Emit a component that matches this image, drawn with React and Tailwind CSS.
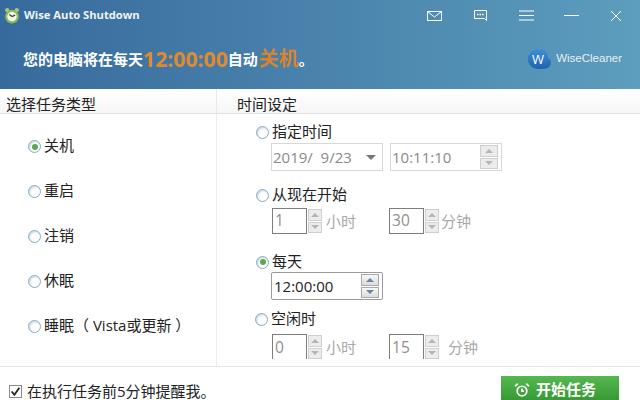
import React from 'react';

const cjk = "font-['Open_Sans','Noto_Sans_CJK_SC',sans-serif]";

function Radio({ checked }) {
  return (
    <span className="flex h-[13px] w-[13px] shrink-0 items-center justify-center rounded-full border border-[#85adc4] bg-white shadow-[inset_1px_1px_2px_#c3d2db]">
      {checked && <span className="h-[6px] w-[6px] rounded-full bg-[#5fa84f]" />}
    </span>
  );
}

function TaskOption({ label, checked }) {
  return (
    <div className="flex h-[45px] items-center gap-[3px] pl-[28px] text-[15px] leading-none text-[#222]">
      <Radio checked={checked} />
      <span className="pb-[2px]">{label}</span>
    </div>
  );
}

function TimeOption({ label, checked, className = '' }) {
  return (
    <div className={`flex h-[18px] items-center gap-[3px] pl-[20px] text-[15px] leading-none text-[#222] ${className}`}>
      <Radio checked={checked} />
      <span className="pb-[1px]">{label}</span>
    </div>
  );
}

function Spin({ w, h, active }) {
  const arrow = active ? 'border-[#6f7fa8]' : 'border-[#b5b5b5]';
  const btn = active
    ? 'border-[#a9a9a9] bg-gradient-to-b from-[#f7f7f7] to-[#dcdcdc]'
    : 'border-[#cfcfcf] bg-[#ececec]';
  return (
    <div className={`flex shrink-0 flex-col gap-px ${w} ${h}`}>
      <div className={`flex flex-1 items-center justify-center border ${btn}`}>
        <span className={`h-0 w-0 border-x-[4px] border-b-[4px] border-x-transparent ${arrow}`} />
      </div>
      <div className={`flex flex-1 items-center justify-center border ${btn}`}>
        <span className={`h-0 w-0 border-x-[4px] border-t-[4px] border-x-transparent ${arrow}`} />
      </div>
    </div>
  );
}

function NumberField({ value, unit, unitGap = 'ml-[4px]', clipped }) {
  return (
    <div className="flex items-center">
      <div className={`flex h-[26px] w-[35px] items-center border border-[#7d7d7d] pl-[2px] text-[15.5px] text-[#8f8f8f] ${clipped ? 'border-b-0' : ''}`}>
        {value}
      </div>
      <div className="ml-[1px]">
        <Spin w="w-[14px]" h="h-[24px]" />
      </div>
      <span className={`${unitGap} text-[15px] leading-none text-[#a9a9a9]`}>{unit}</span>
    </div>
  );
}

export default function App() {
  return (
    <div className={`flex h-[400px] w-[640px] flex-col overflow-hidden bg-white ${cjk}`}>
      <div className="flex h-[89px] shrink-0 flex-col bg-gradient-to-r from-[#376a9c] to-[#5d9dbd] text-white">
        <div className="flex h-[31px] items-center pl-[4px]">
          <svg width="16" height="17" viewBox="0 0 15 16" className="mr-[4px]">
            <circle cx="3" cy="3" r="2" fill="#a9c77c" />
            <circle cx="12" cy="3" r="2" fill="#a9c77c" />
            <circle cx="7.5" cy="9" r="6.5" fill="#8fb35f" />
            <circle cx="7.5" cy="9" r="4.5" fill="#f1f5e6" />
            <path d="M7.5 9 L5 7 M7.5 9 L10.5 7.5" stroke="#39451f" strokeWidth="1.2" />
          </svg>
          <span className="font-['Open_Sans',sans-serif] text-[11.2px] font-bold text-[#eef4f8]">Wise Auto Shutdown</span>
          <div className="ml-auto flex items-center">
            <svg width="15" height="12" viewBox="0 0 15 12" fill="none" stroke="white" className="mr-[32px]">
              <rect x="0.5" y="1.5" width="14" height="9" />
              <path d="M0.5 1.5 L7.5 7 L14.5 1.5" />
            </svg>
            <svg width="13" height="13" viewBox="0 0 13 13" fill="none" stroke="white" className="mr-[32px]">
              <path d="M0.5 1.5 H12.5 V11.5 L10.5 9.5 H0.5 Z" />
              <path d="M3 5.5 H4.5 M5.5 5.5 H7 M8 5.5 H9.5" strokeWidth="1.6" />
            </svg>
            <svg width="15" height="11" viewBox="0 0 15 11" stroke="white" className="mr-[30px]">
              <path d="M0 1 H15 M0 5.5 H15 M0 10 H15" />
            </svg>
            <svg width="15" height="3" viewBox="0 0 15 3" stroke="white" className="mr-[31px]">
              <path d="M0 1.5 H15" />
            </svg>
            <svg width="12" height="12" viewBox="0 0 12 12" stroke="white" className="mr-[18px]">
              <path d="M1 1 L11 11 M11 1 L1 11" />
            </svg>
          </div>
        </div>
        <div className="flex flex-1 items-center pb-[2px] pl-[23px]">
          <span className="text-[15px] font-bold leading-none">您的电脑将在每天</span>
          <span className="text-[21.2px] font-bold leading-none text-[#e08a2e]">12:00:00</span>
          <span className="text-[15px] font-bold leading-none">自动</span>
          <span className="ml-[1px] text-[20px] font-bold leading-none text-[#d9832c]">关机</span>
          <span className="text-[15px] font-bold leading-none">。</span>
          <div className="ml-auto mr-[18px] flex items-center">
            <svg width="24" height="22" viewBox="0 0 24 22" className="mr-[4px]">
              <defs>
                <linearGradient id="wc" x1="0" y1="0" x2="0" y2="1">
                  <stop offset="0" stopColor="#3f8fd8" />
                  <stop offset="1" stopColor="#1f62ad" />
                </linearGradient>
              </defs>
              <path d="M11 1 C17 1 20 5 20 10 C23 11 24 15 22 18 C20 21 15 21 11 21 C5 21 0 17 0 11 C0 5 5 1 11 1 Z" fill="url(#wc)" />
              <text x="10" y="15.5" textAnchor="middle" fontSize="13" fontWeight="400" fill="white">W</text>
            </svg>
            <span className="font-['Liberation_Sans',sans-serif] text-[11.5px] leading-none text-[#e6f0f5]">WiseCleaner</span>
          </div>
        </div>
      </div>

      <div className="flex h-[25px] shrink-0 border-b border-[#e2e2e2] bg-gradient-to-b from-white to-[#f6f6f6] text-[15px] leading-none text-[#222]">
        <div className="flex w-[217px] items-end border-r border-[#e8e8e8] pb-[1px] pl-[6px]">选择任务类型</div>
        <div className="flex flex-1 items-end pb-[1px] pl-[20px]">时间设定</div>
      </div>

      <div className="flex h-[253px] shrink-0 border-b border-[#e6e6e6]">
        <div className="w-[217px] shrink-0 border-r border-[#ececec] pt-[10px]">
          <TaskOption label="关机" checked />
          <TaskOption label="重启" />
          <TaskOption label="注销" />
          <TaskOption label="休眠" />
          <TaskOption label="睡眠（ Vista或更新 ）" />
        </div>
        <div className="h-[245px] flex-1 overflow-hidden pl-[19px] pt-[9px]">
          <TimeOption label="指定时间" />
          <div className="mt-[2px] ml-[35px] flex gap-[7px]">
            <div className="flex h-[28px] w-[112px] items-center justify-between border border-[#d8d8d8] pl-[1px] pr-[6px] text-[15px] text-[#8a8a8a]">
              <span>2019/&nbsp; 9/23</span>
              <span className="h-0 w-0 border-x-[5px] border-t-[5px] border-x-transparent border-t-[#777]" />
            </div>
            <div className="flex h-[28px] w-[112px] items-center justify-between border border-[#d8d8d8] pl-[1px] pr-[3px] text-[15px] text-[#8a8a8a]">
              <span>10:11:10</span>
              <Spin w="w-[18px]" h="h-[24px]" />
            </div>
          </div>
          <TimeOption label="从现在开始" className="mt-[15px]" />
          <div className="ml-[36px] mt-[4px] flex gap-[33px]">
            <NumberField value="1" unit="小时" />
            <NumberField value="30" unit="分钟" unitGap="ml-[2px]" />
          </div>
          <TimeOption label="每天" checked className="mt-[19px]" />
          <div className="ml-[35px] mt-[1px] flex h-[28px] w-[112px] items-center justify-between rounded-[2px] border border-[#9a9a9a] pl-[2px] pr-[3px] text-[15px] text-[#222]">
            <span>12:00:00</span>
            <Spin w="w-[18px]" h="h-[24px]" active />
          </div>
          <TimeOption label="空闲时" className="-ml-px mt-[10px]" />
          <div className="ml-[36px] mt-[6px] flex gap-[33px]">
            <NumberField value="0" unit="小时" clipped />
            <NumberField value="15" unit="分钟" unitGap="ml-[9px]" clipped />
          </div>
        </div>
      </div>

      <div className="flex flex-1 items-start">
        <div className="mt-[17px] flex items-center pl-[9px] text-[15px] leading-none text-[#222]">
          <span className="mr-[5px] flex h-[13px] w-[13px] items-center justify-center border border-[#8a8a8a]">
            <svg width="11" height="11" viewBox="0 0 10 10" fill="none" stroke="#222" strokeWidth="1.6">
              <path d="M1.5 5 L4 8 L8.5 1.5" />
            </svg>
          </span>
          <span>在执行任务前5分钟提醒我。</span>
        </div>
        <div className="ml-auto mr-[21px] mt-[9px] flex h-[32px] w-[118px] items-start bg-gradient-to-b from-[#55b84f] to-[#2f8f2c] pl-[13px] pt-[6px] text-white">
          <svg width="16" height="16" viewBox="0 0 15 15" fill="none" stroke="white" strokeWidth="1.6" className="mr-[6px]">
            <circle cx="7.5" cy="8.5" r="4.5" />
            <path d="M1 4 L3.5 1.5 M14 4 L11.5 1.5 M7.5 6 V8.5 H9.5" />
          </svg>
          <span className="text-[15px] font-bold leading-none">开始任务</span>
        </div>
      </div>
    </div>
  );
}
